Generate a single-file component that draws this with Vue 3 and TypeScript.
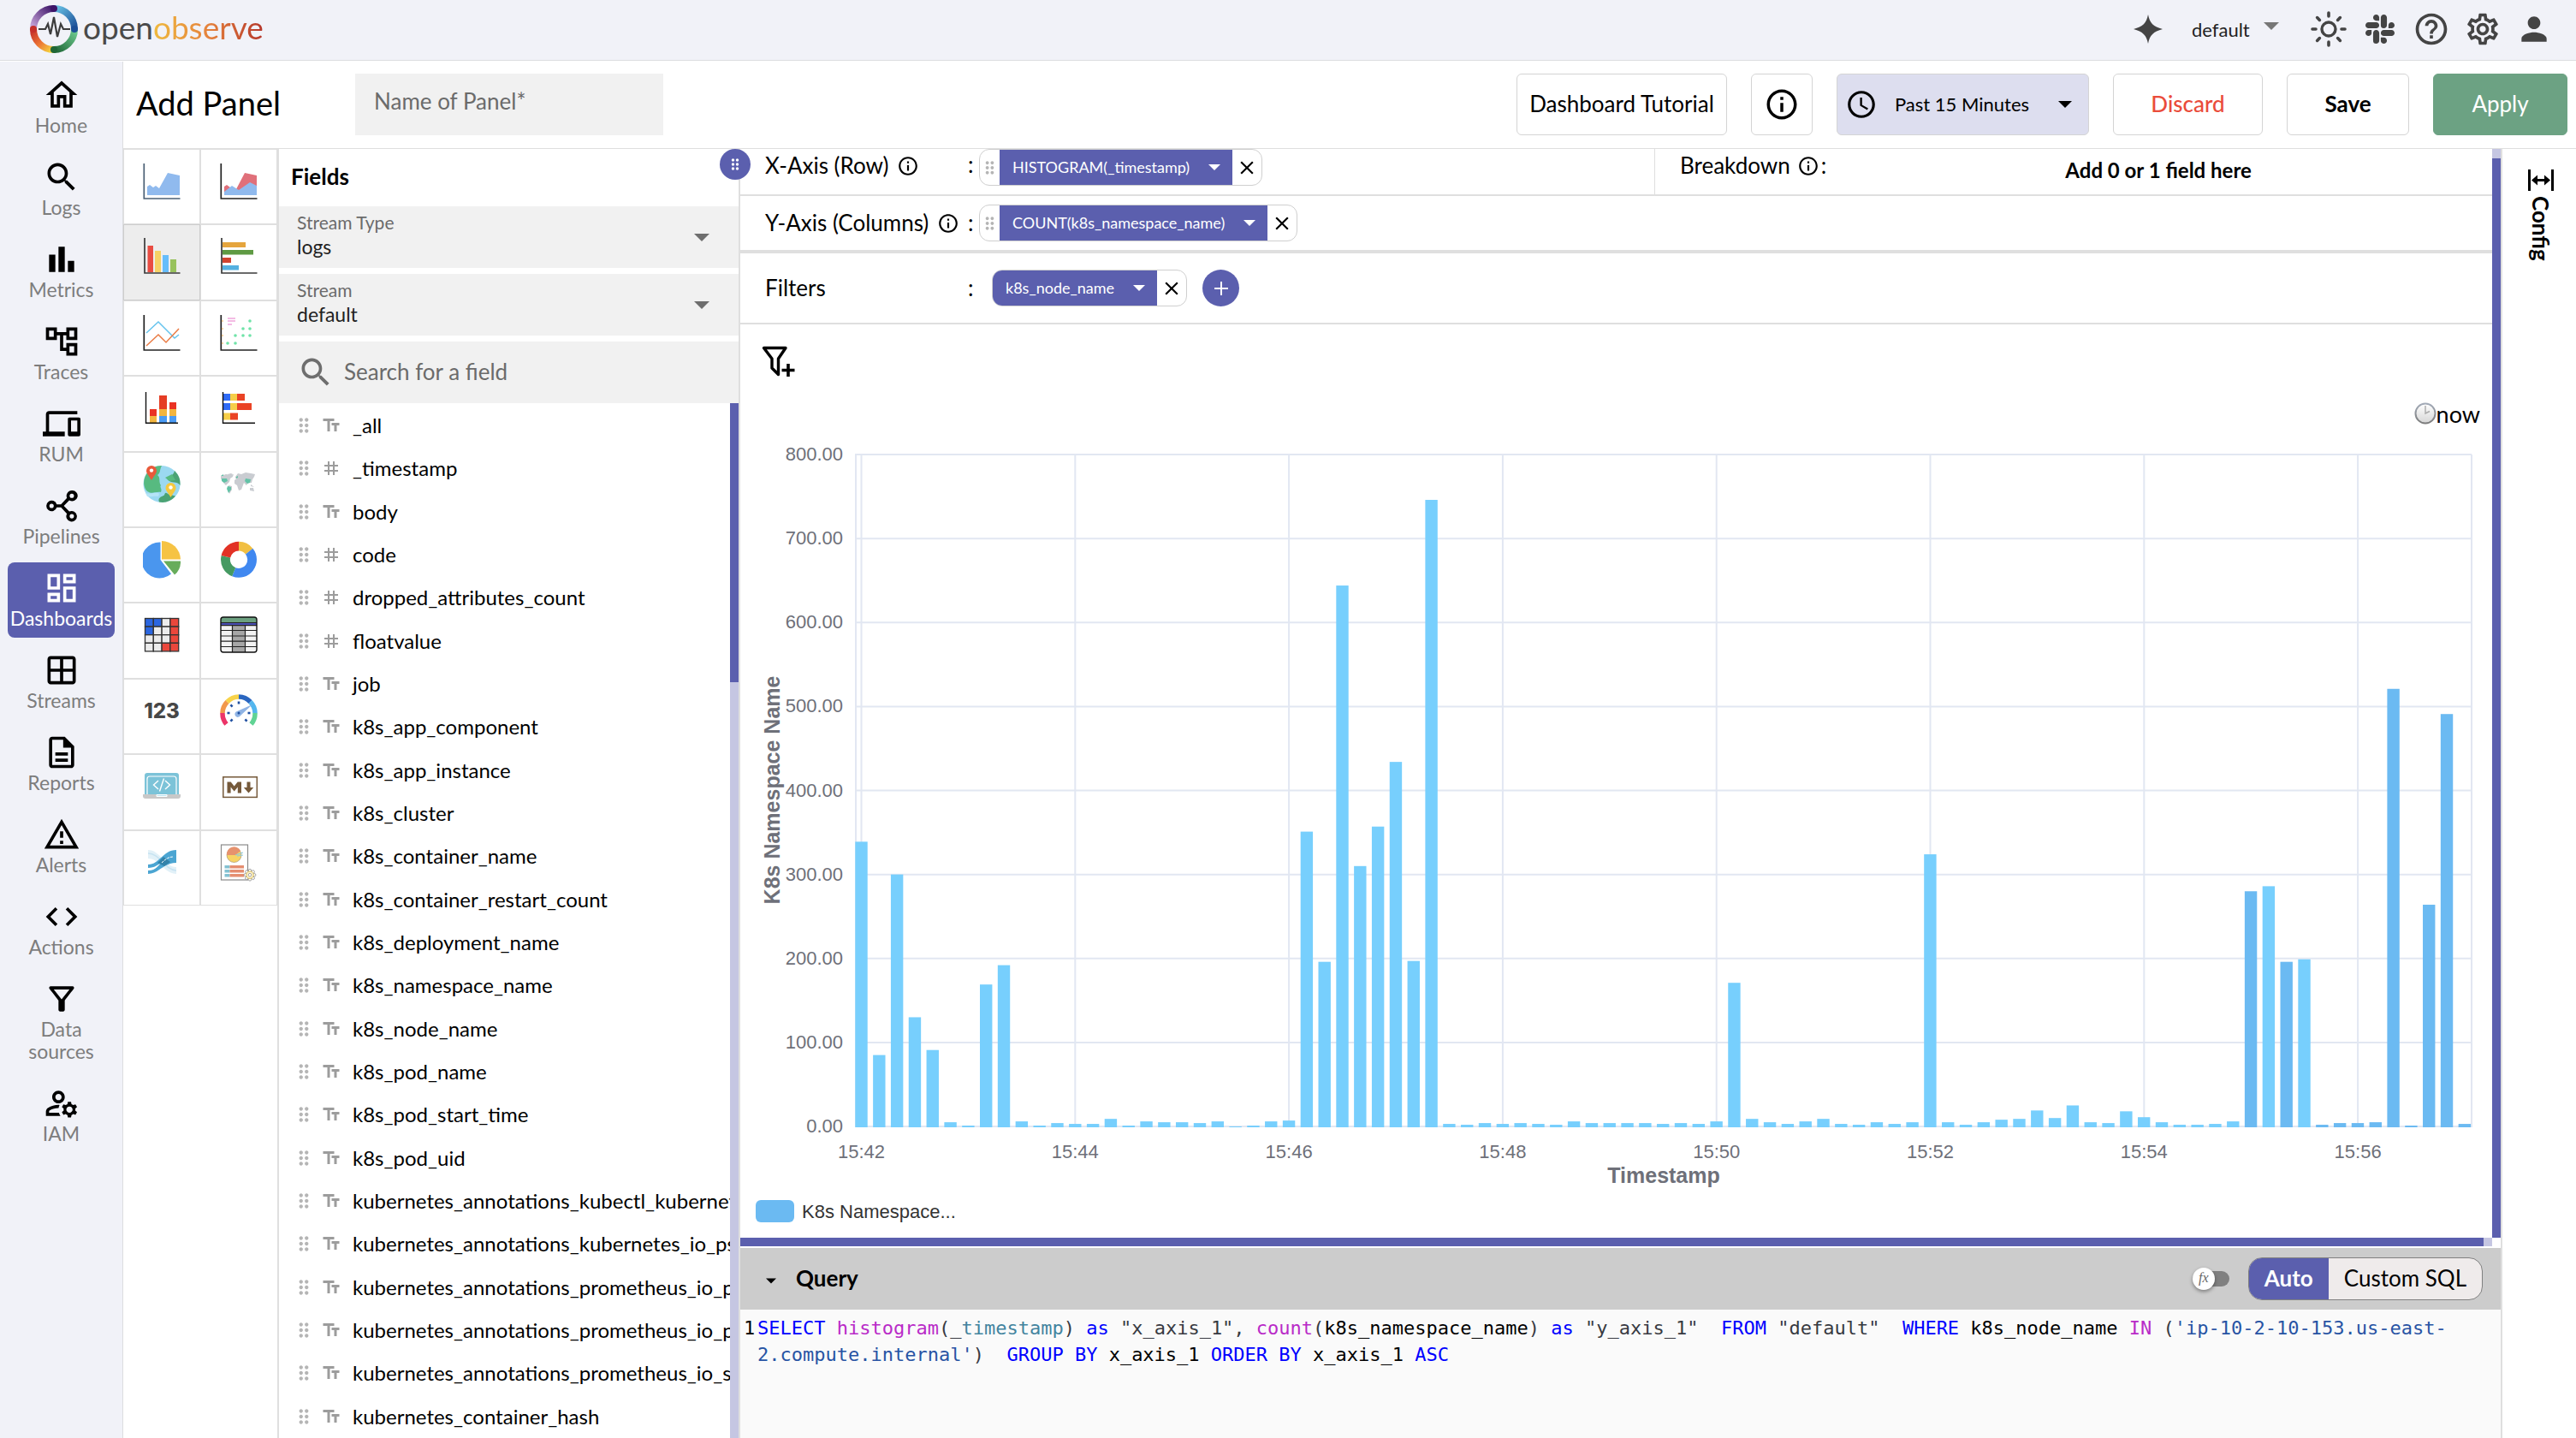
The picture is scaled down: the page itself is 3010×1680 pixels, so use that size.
<script setup lang="ts">
import { ref } from 'vue'

interface NavItem { label: string; path: string; active?: boolean }
interface Field { name: string; numeric?: boolean }
interface Token { t: string; k?: string }

const nav: NavItem[] = [
  { label: 'Home', path: 'M12 5.69l5 4.5V18h-2v-6H9v6H7v-7.81l5-4.5M12 3L2 12h3v8h6v-6h2v6h6v-8h3L12 3z' },
  { label: 'Logs', path: 'M15.5 14h-.79l-.28-.27C15.41 12.59 16 11.11 16 9.5 16 5.91 13.09 3 9.5 3S3 5.91 3 9.5 5.91 16 9.5 16c1.61 0 3.09-.59 4.23-1.57l.27.28v.79l5 4.99L20.49 19l-4.99-5zm-6 0C7.01 14 5 11.99 5 9.5S7.01 5 9.5 5 14 7.01 14 9.5 11.99 14 9.5 14z' },
  { label: 'Metrics', path: 'M4 9h4v11H4zm12 4h4v7h-4zm-6-9h4v16h-4z' },
  { label: 'Traces', path: 'M22 11V3h-7v3H9V3H2v8h7V8h2v10h4v3h7v-8h-7v3h-2V8h2v3h7zM7 9H4V5h3v4zm10 6h3v4h-3v-4zm0-10h3v4h-3V5z' },
  { label: 'RUM', path: 'M4 6h18V4H4c-1.1 0-2 .9-2 2v11H0v3h14v-3H4V6zm19 2h-6c-.55 0-1 .45-1 1v10c0 .55.45 1 1 1h6c.55 0 1-.45 1-1V9c0-.55-.45-1-1-1zm-1 9h-4v-7h4v7z' },
  { label: 'Pipelines', path: 'M18.5 2.2a3.4 3.4 0 0 0-3.1 4.8L11.6 11H8.9a3.4 3.4 0 1 0 0 2h2.7l3.8 4a3.4 3.4 0 1 0 1.5-1.4L13.4 12l3.5-3.6a3.4 3.4 0 1 0 1.6-6.2zm0 2a1.4 1.4 0 1 1 0 2.8 1.4 1.4 0 0 1 0-2.8zM5.6 10.6a1.4 1.4 0 1 1 0 2.8 1.4 1.4 0 0 1 0-2.8zm12.9 6.6a1.4 1.4 0 1 1 0 2.8 1.4 1.4 0 0 1 0-2.8z' },
  { label: 'Dashboards', active: true, path: 'M19 5v2h-4V5h4M9 5v6H5V5h4m10 8v6h-4v-6h4M9 17v2H5v-2h4M21 3h-8v6h8V3zM11 3H3v10h8V3zm10 8h-8v10h8V11zm-10 4H3v6h8v-6z' },
  { label: 'Streams', path: 'M19 3H5c-1.1 0-2 .9-2 2v14c0 1.1.9 2 2 2h14c1.1 0 2-.9 2-2V5c0-1.1-.9-2-2-2zm0 8h-6V5h6v6zm-8-6v6H5V5h6zm-6 8h6v6H5v-6zm8 6v-6h6v6h-6z' },
  { label: 'Reports', path: 'M8 16h8v2H8zm0-4h8v2H8zm6-10H6c-1.1 0-2 .9-2 2v16c0 1.1.89 2 1.99 2H18c1.1 0 2-.9 2-2V8l-6-6zm4 18H6V4h7v5h5v11z' },
  { label: 'Alerts', path: 'M12 5.99L19.53 19H4.47L12 5.99M12 2L1 21h22L12 2zm1 14h-2v2h2v-2zm0-6h-2v4h2v-4z' },
  { label: 'Actions', path: 'M9.4 16.6L4.8 12l4.6-4.6L8 6l-6 6 6 6 1.4-1.4zm5.2 0l4.6-4.6-4.6-4.6L16 6l6 6-6 6-1.4-1.4z' },
  { label: 'Data sources', path: 'M7 6h10l-5.01 6.3L7 6zm-2.75-.39C6.27 8.2 10 13 10 13v6c0 .55.45 1 1 1h2c.55 0 1-.45 1-1v-6s3.72-4.8 5.74-7.39c.51-.66.04-1.61-.79-1.61H5.04c-.83 0-1.3.95-.79 1.61z' },
  { label: 'IAM', path: 'M4 18v-.65c0-.34.16-.66.41-.81C6.1 15.53 8.03 15 10 15c.03 0 .05 0 .08.01.1-.7.3-1.37.59-1.98-.22-.02-.44-.03-.67-.03-2.42 0-4.68.67-6.61 1.82-.88.52-1.39 1.5-1.39 2.53V20h9.26c-.42-.6-.75-1.28-.97-2H4zM10 12c2.21 0 4-1.79 4-4s-1.79-4-4-4-4 1.79-4 4 1.79 4 4 4zm0-6c1.1 0 2 .9 2 2s-.9 2-2 2-2-.9-2-2 .9-2 2-2zM20.75 16c0-.22-.03-.42-.06-.63l1.14-1.01-1-1.73-1.45.49c-.32-.27-.68-.48-1.08-.63L18 11h-2l-.3 1.49c-.4.15-.76.36-1.08.63l-1.45-.49-1 1.73 1.14 1.01c-.03.21-.06.41-.06.63s.03.42.06.63l-1.14 1.01 1 1.73 1.45-.49c.32.27.68.48 1.08.63L16 21h2l.3-1.49c.4-.15.76-.36 1.08-.63l1.45.49 1-1.73-1.14-1.01c.03-.21.06-.41.06-.63zM17 18c-1.1 0-2-.9-2-2s.9-2 2-2 2 .9 2 2-.9 2-2 2z' },
]

const infoPath = 'M11 7h2v2h-2zm0 4h2v6h-2zm1-9C6.48 2 2 6.48 2 12s4.48 10 10 10 10-4.48 10-10S17.52 2 12 2zm0 18c-4.41 0-8-3.59-8-8s3.59-8 8-8 8 3.59 8 8-3.59 8-8 8z'
const closePath = 'M19 6.41L17.59 5 12 10.59 6.41 5 5 6.41 10.59 12 5 17.59 6.41 19 12 13.41 17.59 19 19 17.59 13.41 12z'
const helpPath = 'M11 18h2v-2h-2v2zm1-16C6.48 2 2 6.48 2 12s4.48 10 10 10 10-4.48 10-10S17.52 2 12 2zm0 18c-4.41 0-8-3.59-8-8s3.59-8 8-8 8 3.59 8 8-3.59 8-8 8zm0-14c-2.21 0-4 1.79-4 4h2c0-1.1.9-2 2-2s2 .9 2 2c0 2-3 1.75-3 5h2c0-2.25 3-2.5 3-5 0-2.21-1.79-4-4-4z'
const gearPath = 'M19.43 12.98c.04-.32.07-.64.07-.98s-.03-.66-.07-.98l2.11-1.65c.19-.15.24-.42.12-.64l-2-3.46c-.09-.16-.26-.25-.44-.25-.06 0-.12.01-.17.03l-2.49 1c-.52-.4-1.08-.73-1.69-.98l-.38-2.65C14.46 2.18 14.25 2 14 2h-4c-.25 0-.46.18-.49.42l-.38 2.65c-.61.25-1.17.59-1.69.98l-2.49-1c-.06-.02-.12-.03-.18-.03-.17 0-.34.09-.43.25l-2 3.46c-.13.22-.07.49.12.64l2.11 1.65c-.04.32-.07.65-.07.98s.03.66.07.98l-2.11 1.65c-.19.15-.24.42-.12.64l2 3.46c.09.16.26.25.44.25.06 0 .12-.01.17-.03l2.49-1c.52.4 1.08.73 1.69.98l.38 2.65c.03.24.24.42.49.42h4c.25 0 .46-.18.49-.42l.38-2.65c.61-.25 1.17-.59 1.69-.98l2.49 1c.06.02.12.03.18.03.17 0 .34-.09.43-.25l2-3.46c.12-.22.07-.49-.12-.64l-2.11-1.65zm-1.98-1.71c.04.31.05.52.05.73 0 .21-.02.43-.05.73l-.14 1.13.89.7 1.08.84-.7 1.21-1.27-.51-1.04-.42-.9.68c-.43.32-.84.56-1.25.73l-1.06.43-.16 1.13-.2 1.35h-1.4l-.19-1.35-.16-1.13-1.06-.43c-.43-.18-.83-.41-1.23-.71l-.91-.7-1.06.43-1.27.51-.7-1.21 1.08-.84.89-.7-.14-1.13c-.03-.31-.05-.54-.05-.74s.02-.43.05-.73l.14-1.13-.89-.7-1.08-.84.7-1.21 1.27.51 1.04.42.9-.68c.43-.32.84-.56 1.25-.73l1.06-.43.16-1.13.2-1.35h1.39l.19 1.35.16 1.13 1.06.43c.43.18.83.41 1.23.71l.91.7 1.06-.43 1.27-.51.7 1.21-1.07.85-.89.7.14 1.13zM12 8c-2.21 0-4 1.79-4 4s1.79 4 4 4 4-1.79 4-4-1.79-4-4-4zm0 6c-1.1 0-2-.9-2-2s.9-2 2-2 2 .9 2 2-.9 2-2 2z'
const slackPath = 'M3.362 10.11c0 .926-.756 1.681-1.681 1.681S0 11.036 0 10.111.756 8.43 1.68 8.43h1.682zm.846 0c0-.924.756-1.68 1.681-1.68s1.681.756 1.681 1.68v4.21c0 .924-.756 1.68-1.68 1.68a1.685 1.685 0 0 1-1.682-1.68zM5.89 3.362c-.926 0-1.682-.756-1.682-1.681S4.964 0 5.89 0s1.68.756 1.68 1.68v1.682zm0 .846c.924 0 1.68.756 1.68 1.681S6.814 7.57 5.89 7.57H1.68C.757 7.57 0 6.814 0 5.89c0-.926.756-1.682 1.68-1.682zm6.749 1.682c0-.926.755-1.682 1.68-1.682S16 4.964 16 5.889s-.756 1.681-1.68 1.681h-1.681zm-.848 0c0 .924-.755 1.68-1.68 1.68A1.685 1.685 0 0 1 8.43 5.89V1.68C8.43.757 9.186 0 10.11 0c.926 0 1.681.756 1.681 1.68zm-1.681 6.748c.926 0 1.682.756 1.682 1.681S11.036 16 10.11 16s-1.681-.756-1.681-1.68v-1.682h1.68zm0-.847c-.924 0-1.68-.755-1.68-1.68s.756-1.681 1.68-1.681h4.21c.924 0 1.68.756 1.68 1.68 0 .926-.756 1.681-1.68 1.681z'
const personPath = 'M12 12c2.21 0 4-1.79 4-4s-1.79-4-4-4-4 1.79-4 4 1.79 4 4 4zm0 2c-2.67 0-8 1.34-8 4v2h16v-2c0-2.66-5.33-4-8-4z'
const clockPath = 'M11.99 2C6.47 2 2 6.48 2 12s4.47 10 9.99 10C17.52 22 22 17.52 22 12S17.52 2 11.99 2zM12 20c-4.42 0-8-3.58-8-8s3.58-8 8-8 8 3.58 8 8-3.58 8-8 8zm.5-13H11v6l5.25 3.15.75-1.23-4.5-2.67z'
const textPath = 'M2.5 4v3h5v12h3V7h5V4h-13zm19 5h-9v3h3v7h3v-7h3V9z'
const hashPath = 'M20 10V8h-4V4h-2v4h-4V4H8v4H4v2h4v4H4v2h4v4h2v-4h4v4h2v-4h4v-2h-4v-4h4zm-6 4h-4v-4h4v4z'
const dotsPath = 'M11 18c0 1.1-.9 2-2 2s-2-.9-2-2 .9-2 2-2 2 .9 2 2zm-2-8c-1.1 0-2 .9-2 2s.9 2 2 2 2-.9 2-2-.9-2-2-2zm0-6c-1.1 0-2 .9-2 2s.9 2 2 2 2-.9 2-2-.9-2-2-2zm6 4c1.1 0 2-.9 2-2s-.9-2-2-2-2 .9-2 2 .9 2 2 2zm0 2c-1.1 0-2 .9-2 2s.9 2 2 2 2-.9 2-2-.9-2-2-2zm0 6c-1.1 0-2 .9-2 2s.9 2 2 2 2-.9 2-2-.9-2-2-2z'

const r = (x: number, y: number, w: number, h: number, f: string) => `<rect x="${x}" y="${y}" width="${w}" height="${h}" fill="${f}"/>`
const axes = (c: string, x = 1.3, y = 42) => `<path d="M${x} ${y - 41}V${y}H43.5" fill="none" stroke="${c}" stroke-width="1.7"/>`

const heatCells = ['bbgr', 'bggr', 'gggr', 'ggrr']
  .map((row, j) => [...row].map((c, i) => `<rect x="${2.5 + i * 9.8}" y="${2.5 + j * 9.6}" width="9.8" height="9.6" fill="${c === 'b' ? '#2b66e0' : c === 'r' ? '#ea473c' : '#ececec'}" stroke="#333" stroke-width="1.3"/>`).join('')).join('')
const scatterDots = [[9, 34], [18, 34], [18, 25], [27, 25], [35, 25], [27, 17], [35, 17], [35, 8]]
  .map(([x, y]) => `<circle cx="${x}" cy="${y}" r="1.8" fill="#6fe3a8"/>`).join('')
const gaugeTicks = [135, 180, 225, 270, 0, 45]
  .map((a) => `<path d="M10.5 0h3" stroke="#1f4fa0" stroke-width="2.6" transform="translate(22 24) rotate(${a})"/>`).join('')
const gear = [0, 45, 90, 135, 180, 225, 270, 315]
  .map((a) => `<circle cx="35" cy="31" r="1.7" fill="#fff" stroke="#8e8e8e" stroke-width=".8" transform="rotate(${a} 35 36.2)"/>`).join('')

const chartTypes: { name: string; svg: string }[] = [
  { name: 'Area', svg: axes('#4b6075') + '<path d="M5 28l3-2 4 3 3-2 4 3L29 12l14 3v23H5z" fill="#90baee"/>' },
  { name: 'Stacked area', svg: axes('#222') + '<path d="M5 28l3-2 4 3 7 2L29 12l14 3v23H5z" fill="#e0707a"/><path d="M5 34l9-7 8 5 13-9 8 4v11H5z" fill="#90baee"/>' },
  { name: 'Bar', svg: r(5.5, 9, 6.5, 31, '#e94c42') + r(14, 15, 7, 25, '#f6d165') + r(23, 20, 7, 20, '#66bdfb') + r(32, 25, 7, 15, '#98c25c') + axes('#3a3a3a', 2, 41) },
  { name: 'Horizontal bar', svg: r(3, 5, 27, 6, '#e5a53d') + r(3, 14, 36, 5.5, '#5f9a43') + r(3, 23, 10, 6, '#d1432f') + r(3, 32, 19, 5.5, '#55b0e0') + axes('#3a3a3a', 2, 41) },
  { name: 'Line', svg: axes('#222') + '<path d="M4 22L18 9l19 19 5-4" fill="none" stroke="#66c4ee" stroke-width="1.5"/><path d="M4 37l14-13 9 9 15-16" fill="none" stroke="#ea7c45" stroke-width="1.5"/>' },
  { name: 'Scatter', svg: axes('#222') + scatterDots + '<path d="M9 5h9M9 8h9M9 12h5" stroke="#efa6dc" stroke-width="1.5"/><path d="M2 8h2M2 17h2M2 25h2M2 34h2" stroke="#f5c98c" stroke-width="1.5"/>' },
  { name: 'Stacked', svg: r(8, 23, 8, 8, '#ea3223') + r(8, 31, 8, 8, '#f3b53f') + r(19, 7, 9, 16, '#e53d25') + r(19, 23, 9, 8, '#f3b53f') + r(19, 31, 9, 8, '#4a9bf5') + r(31, 15, 8, 8, '#ea3223') + r(31, 23, 8, 8, '#f3b53f') + r(31, 31, 8, 8, '#4a9bf5') + '<path d="M3.5 3v36.3H41" fill="none" stroke="#111" stroke-width="1.4"/>' },
  { name: 'Horizontal stacked', svg: r(4, 5, 8, 8, '#2f6bf6') + r(12, 5, 8, 8, '#f6ce48') + r(20, 5, 9, 8, '#ea4325') + r(4, 16, 8, 8, '#2f6bf6') + r(12, 16, 8, 8, '#f6ce48') + r(20, 16, 17, 8, '#ea4325') + r(4, 27.5, 8, 8, '#f6ce48') + r(12, 27.5, 9, 8, '#ea4325') + '<path d="M3.5 3v36.3H41" fill="none" stroke="#111" stroke-width="1.4"/>' },
  { name: 'Geo map', svg: '<circle cx="22" cy="21.5" r="21.5" fill="#9bd9f1"/><path d="M4 10C8 3 15 0 22 0c-3 6-1 8-5 11 4 3 1 8 4 12-2 2 2 4 0 8-6-1-10 3-16-1C0 25 0 16 4 10z" fill="#57ba80"/><path d="M37 6c5 5 7 10 6.500 17-4-6-10-1-15-7 0-4 7-3 8.500-10z" fill="#4ba374"/><path d="M26 14l8-4 4 7-7 1z" fill="#57ba80"/><path d="M19 42.500c-2-5 2-6 6-8 1-4 2-3 5-1l8 2c-5 6-12 8.500-19 7z" fill="#4ba374"/><path d="M3 32c6 2 12-2 16 1l-1 3c-5-1-9 1-13 0z" fill="#b5e4f6"/><path d="M10 17C7 12 4 9 4 6a6 6 0 0 1 12 0c0 3-3 6-6 11z" fill="#e9593a"/><circle cx="10" cy="5.600" r="2.200" fill="#fff"/><path d="M32.500 37c-3-5-6-8-6-11a6 6 0 0 1 12 0c0 3-3 6-6 11z" fill="#f5c93f"/><circle cx="32.500" cy="25.500" r="2.200" fill="#fff"/>' },
  { name: 'World map', svg: '<path d="M1 12l6-2 6 1 3-1-1 3-3 2-1 4-4 4-3-3-3-5zM9 10l4-1 2 1-3 2zM10 23l4 1 0 4-3 5-2-6zM17 17l4-3 5 1 2 5-3 8-3 1-2-6-3-2zM18 13l3-4 4 1 5-2 6 1 5 1-1 3-2 3-1 4-4 0-2 3-3-3-3-1-3-4-4 0zM35 26l4 0 1 4-5-1zM36 22l4 3-4-1z" fill="#c9ccd1"/><path d="M2 15l6 0 1 3-4 2-3-2zM9 24l4 1 0 3-3 4-2-5zM1 12l3-2 0 2zM30 15l6 1-1 4-3 1-3-3zM19 13l2-1 0 2-2 1z" fill="#62c2a6"/>' },
  { name: 'Pie', svg: '<path d="M20.500 1.500V22L33 38.500A21 21 0 1 1 20.500 1.500z" fill="#4a96ee"/><path d="M22 0a22 22 0 0 1 22 21.500H22z" fill="#f6c344"/><path d="M24 23.500h20a20 20 0 0 1-7 16z" fill="#67ac5b"/>' },
  { name: 'Donut', svg: '<g fill="none" stroke-width="10.800"><path d="M22 6.200a15.500 15.500 0 0 1 12.200 6" stroke="#f1bf42"/><path d="M34.200 12.200a15.500 15.500 0 0 1-18 24" stroke="#4088f0"/><path d="M16.200 36.200a15.500 15.500 0 0 1-9.300-18" stroke="#459a62"/><path d="M6.900 18.200A15.500 15.500 0 0 1 22 6.200" stroke="#e23225"/></g>' },
  { name: 'Heatmap', svg: heatCells },
  { name: 'Table', svg: '<rect x="1" y="1" width="42" height="41" rx="3" fill="#f2f2f2"/>' + r(14.5, 10, 15, 32, '#a6a6a6') + '<path d="M1 8V4a3 3 0 0 1 3-3h36a3 3 0 0 1 3 3v4z" fill="#6ba07f"/>' + r(1, 8, 42, 2.5, '#4a50b5') + '<path d="M1 7.500h42M1 10.600h42M1 16.500h42M1 23h42M1 29.200h42M1 35.500h42M14.500 10v32M29.500 10v32" stroke="#222" stroke-width="1.2"/><rect x="1" y="1" width="42" height="41" rx="3" fill="none" stroke="#111" stroke-width="1.4"/>' },
  { name: 'Metric text', svg: '<text x="22" y="30" text-anchor="middle" font-family="Inter, sans-serif" font-weight="800" font-size="24" fill="#474747">123</text>' },
  { name: 'Gauge', svg: '<g fill="none" stroke-width="5.500"><path d="M7.500 37A19 19 0 0 1 3 24" stroke="#ec3468"/><path d="M3 24a19 19 0 0 1 5.500-13" stroke="#f2984c"/><path d="M8.500 11A19 19 0 0 1 22 5" stroke="#f8d34a"/><path d="M22 5a19 19 0 0 1 13.500 6" stroke="#2a66c0"/><path d="M35.500 11A19 19 0 0 1 41 24" stroke="#52b6ee"/><path d="M41 24a19 19 0 0 1-4.500 13" stroke="#60d394"/></g>' + gaugeTicks + '<path d="M20 22L38 14 24 27a3.500 3.500 0 1 1-4-5z" fill="#8fb3e4"/><circle cx="22" cy="24" r="1.500" fill="#1f4fa0"/>' },
  { name: 'HTML', svg: '<path d="M2 31V9a3 3 0 0 1 3-3h34a3 3 0 0 1 3 3v22z" fill="#7cc3d8"/><path d="M5 31V13a3 3 0 0 1 3-3h28a3 3 0 0 1 3 3v18" fill="none" stroke="#fff" stroke-width="1.2"/><path d="M0 31h44v2a3 3 0 0 1-3 3H3a3 3 0 0 1-3-3z" fill="#c8c8c8"/><path d="M16 31.500h12v2H16z" fill="#b9e3f0" stroke="#fff"/><path d="M18 15l-5.500 5 5.500 5M26 15l5.500 5-5.500 5M24.500 12.500l-5 15" fill="none" stroke="#fff" stroke-width="1.4"/>' },
  { name: 'Markdown', svg: '<rect x="3.800" y="10.800" width="39.500" height="23.600" fill="#fff" stroke="#75593a" stroke-width="1.500"/><path d="M8.500 29.500v-13h4.200l4 5 4-5H25v13h-4.200v-7l-4.100 5-4.100-5v7zM31.500 16.500h4v6.500h3.700L33.500 29.500l-5.700-6.500h3.700z" fill="#75593a"/>' },
  { name: 'Sankey', svg: '<path d="M6 7c14 0 20 20 33 20v8C25 35 20 17 6 17z" fill="#e2f1f8"/><path d="M6 11c14 0 20 20 33 20" fill="none" stroke="#c7e3f1" stroke-width="1.500"/><path d="M6 24c14 0 17-17 33-17v15C24 22 18 35 6 35v-4c10 0 12-7 16-9-5 2-8 6-16 6z" fill="#4ba5d2"/><path d="M17 22l7-7 8 6-7 5z" fill="#3383aa"/><path d="M22 22c4-4 8-7 13-7" fill="none" stroke="#fff" stroke-width="1" stroke-dasharray="3 1"/>' },
  { name: 'Custom chart', svg: '<rect x="1.500" y="1" width="31" height="41" fill="#fff" stroke="#8b8b8b" stroke-width="1.200"/><circle cx="16.500" cy="13" r="8.500" fill="#f7d364" stroke="#9d8a6a" stroke-width=".6"/><path d="M8 13h10l6-5a8.500 8.500 0 0 0-16 5z" fill="#e6926e"/><path d="M18 13l9-3M20 14l7-1" stroke="#8cc8dc" stroke-width="1.200"/>' + [25, 30, 35].map((y) => r(5.5, y, 6, 3.5, '#83c1d2') + r(11.5, y, 16.5, 3.5, '#e58e70')).join('') + gear + '<circle cx="35" cy="36.200" r="4.200" fill="#fdf3cf" stroke="#e3c55d" stroke-width="1"/><circle cx="35" cy="36.200" r="1.800" fill="#fff" stroke="#8e8e8e" stroke-width=".8"/>' },
]

const fields: Field[] = [
  { name: '_all' }, { name: '_timestamp', numeric: true }, { name: 'body' }, { name: 'code', numeric: true },
  { name: 'dropped_attributes_count', numeric: true }, { name: 'floatvalue', numeric: true }, { name: 'job' },
  { name: 'k8s_app_component' }, { name: 'k8s_app_instance' }, { name: 'k8s_cluster' }, { name: 'k8s_container_name' },
  { name: 'k8s_container_restart_count' }, { name: 'k8s_deployment_name' }, { name: 'k8s_namespace_name' },
  { name: 'k8s_node_name' }, { name: 'k8s_pod_name' }, { name: 'k8s_pod_start_time' }, { name: 'k8s_pod_uid' },
  { name: 'kubernetes_annotations_kubectl_kubernetes_io' }, { name: 'kubernetes_annotations_kubernetes_io_psp' },
  { name: 'kubernetes_annotations_prometheus_io_path' }, { name: 'kubernetes_annotations_prometheus_io_port' },
  { name: 'kubernetes_annotations_prometheus_io_scrape' }, { name: 'kubernetes_container_hash' },
]

/* Counts per 10 seconds, starting at 15:42:00 */
const counts: number[] = [
  339, 85, 300, 130, 91, 5, 1, 169, 192, 6, 1, 4, 3, 3, 9, 1, 6, 5, 5, 4, 6, 0, 1, 6, 7,
  351, 196, 644, 310, 357, 434, 197, 746, 3, 2, 4, 3, 4, 3, 2, 6, 4, 4, 4, 4, 3, 4, 3, 6, 171,
  9, 5, 3, 6, 9, 3, 2, 5, 3, 5, 324, 5, 2, 5, 8, 9, 19, 10, 25, 5, 4, 18, 11, 5, 2, 2, 3, 6,
  280, 286, 196, 199, 2, 4, 4, 5, 521, 1, 264, 491, 3,
]
const darker = new Set([78, 80, 82, 83, 84, 85, 86, 87, 88, 89, 90])
const plot = { left: 134, right: 2023, top: 28, bottom: 813 }
const unit = (plot.bottom - plot.top) / 800
const bars = counts.map((v, i) => {
  const x = 134.3 + i * 20.815
  return { x, y: plot.bottom - v * unit, w: Math.min(14.4, plot.right - x), h: v * unit, fill: darker.has(i) ? '#6bbaf2' : '#77cffd' }
})
const yTicks = [800, 700, 600, 500, 400, 300, 200, 100, 0].map((v) => ({ label: v.toFixed(2), y: plot.bottom - v * unit }))
const xTicks = [42, 44, 46, 48, 50, 52, 54, 56].map((m, k) => ({ label: `15:${m}`, x: 141.5 + k * 249.8 }))

const sql: Token[][] = [
  [
    { t: 'SELECT', k: 'kw' }, { t: ' ' }, { t: 'histogram', k: 'fn' }, { t: '(_' }, { t: 'timestamp', k: 'ty' }, { t: ') ' },
    { t: 'as', k: 'kw' }, { t: ' "x_axis_1", ' }, { t: 'count', k: 'fn' }, { t: '(' }, { t: 'k8s_namespace_name', k: 'id' }, { t: ') ' },
    { t: 'as', k: 'kw' }, { t: ' "y_axis_1"  ' }, { t: 'FROM', k: 'kw' }, { t: ' "default"  ' }, { t: 'WHERE', k: 'kw' },
    { t: ' k8s_node_name ', k: 'id' }, { t: 'IN', k: 'fn' }, { t: ' (' }, { t: "'ip-10-2-10-153.us-east-", k: 'st' },
  ],
  [
    { t: "2.compute.internal'", k: 'st' }, { t: ')  ' }, { t: 'GROUP BY', k: 'kw' }, { t: ' x_axis_1 ', k: 'id' },
    { t: 'ORDER BY', k: 'kw' }, { t: ' x_axis_1 ', k: 'id' }, { t: 'ASC', k: 'kw' },
  ],
]

const panelName = ref('')
const search = ref('')
const selectedType = ref(2)
</script>

<template>
  <div class="app">
    <header class="topbar">
      <a href="#" class="logo" aria-label="openobserve">
        <svg width="56" height="56" viewBox="0 0 56 56" aria-hidden="true">
          <defs>
            <linearGradient id="lgP" x1="0" y1="1" x2="1" y2="0"><stop offset="0" stop-color="#c9a8dc" /><stop offset="1" stop-color="#3d1468" /></linearGradient>
            <linearGradient id="lgB" x1="0" y1="0" x2="1" y2="1"><stop offset="0" stop-color="#69c3e6" /><stop offset="1" stop-color="#1b4e96" /></linearGradient>
            <linearGradient id="lgG" x1="1" y1="0" x2="0" y2="1"><stop offset="0" stop-color="#6ecb90" /><stop offset="1" stop-color="#1f6636" /></linearGradient>
            <linearGradient id="lgR" x1="0" y1="0" x2="1" y2="1"><stop offset="0" stop-color="#c5302a" /><stop offset=".5" stop-color="#ec7434" /><stop offset="1" stop-color="#f5d93e" /></linearGradient>
          </defs>
          <g fill="none" stroke-width="8">
            <path d="M28 4a24 24 0 0 1 24 24" stroke="url(#lgB)" />
            <path d="M52 28a24 24 0 0 1-24 24" stroke="url(#lgG)" />
            <path d="M28 52A24 24 0 0 1 4 28" stroke="url(#lgR)" />
            <path d="M4 28A24 24 0 0 1 28 4" stroke="url(#lgP)" />
          </g>
          <circle cx="28" cy="4" r="4" fill="#3d1468" /><circle cx="52" cy="28" r="4" fill="#1b4e96" />
          <circle cx="28" cy="52" r="4" fill="#1f6636" /><circle cx="4" cy="28" r="4" fill="#c5302a" />
          <path d="M10 28h8l3-6 3 12 4-20 4 23 4-15 3 6h8" fill="none" stroke="#3d3d3d" stroke-width="2.2" />
        </svg>
        <span class="word"><span class="open">open</span><span class="observe">observe</span></span>
      </a>
      <div class="topbar-right">
        <button class="ico spark" aria-label="Assistant"><svg width="34" height="34" viewBox="0 0 34 34"><path d="M17 0c2 10 6 14 17 17-11 3-15 7-17 17C15 24 11 20 0 17 11 14 15 10 17 0z" /></svg></button>
        <span class="org">
          <select aria-label="Organization"><option>default</option></select>
          <svg class="caret" width="18" height="9" viewBox="0 0 10 5"><path d="M0 0h10L5 5z" /></svg>
        </span>
        <button class="ico" aria-label="Theme"><svg width="44" height="44" viewBox="0 0 44 44"><circle cx="22" cy="22" r="8" fill="none" stroke="currentColor" stroke-width="3.4" /><path d="M22 3v4M22 37v4M3 22h4M37 22h4M8.600 8.600l2.800 2.800M32.600 32.600l2.800 2.800M8.600 35.400l2.800-2.800M32.600 11.400l2.800-2.800" stroke="currentColor" stroke-width="3.6" stroke-linecap="round" /></svg></button>
        <button class="ico" aria-label="Slack"><svg width="34" height="34" viewBox="0 0 16 16"><path :d="slackPath" /></svg></button>
        <button class="ico" aria-label="Help"><svg width="44" height="44" viewBox="0 0 24 24"><path :d="helpPath" /></svg></button>
        <button class="ico" aria-label="Settings"><svg width="44" height="44" viewBox="0 0 24 24"><path :d="gearPath" /></svg></button>
        <button class="ico" aria-label="Account"><svg width="44" height="44" viewBox="0 0 24 24"><path :d="personPath" /></svg></button>
      </div>
    </header>

    <div class="shell">
      <nav class="sidebar">
        <a v-for="n in nav" :key="n.label" href="#" class="nav-item" :class="{ active: n.active }">
          <svg width="44" height="44" viewBox="0 0 24 24" aria-hidden="true"><path :d="n.path" /></svg>
          <span>{{ n.label }}</span>
        </a>
      </nav>

      <div class="page">
        <div class="page-head">
          <h1>Add Panel</h1>
          <input v-model="panelName" class="name" type="text" placeholder="Name of Panel*" aria-label="Name of Panel" />
          <div class="actions">
            <button class="btn">Dashboard Tutorial</button>
            <button class="btn info" aria-label="Info"><svg width="42" height="42" viewBox="0 0 24 24"><path :d="infoPath" /></svg></button>
            <button class="btn time">
              <svg width="38" height="38" viewBox="0 0 24 24"><path :d="clockPath" /></svg>
              <span>Past 15 Minutes</span>
              <svg class="caret" width="16" height="8" viewBox="0 0 10 5"><path d="M0 0h10L5 5z" /></svg>
            </button>
            <button class="btn discard">Discard</button>
            <button class="btn save">Save</button>
            <button class="btn apply">Apply</button>
          </div>
        </div>

        <div class="work">
          <div class="types">
            <div class="type-grid">
              <button v-for="(c, i) in chartTypes" :key="c.name" class="type" :class="{ on: i === selectedType }" :aria-label="c.name" @click="selectedType = i">
                <svg width="44" height="44" viewBox="0 0 44 44" v-html="c.svg"></svg>
              </button>
            </div>
          </div>

          <aside class="fields">
            <button class="splitter" aria-label="Toggle fields"><svg width="20" height="20" viewBox="0 0 24 24"><path :d="dotsPath" /></svg></button>
            <h2>Fields</h2>
            <div class="sel">
              <label for="stype">Stream Type</label>
              <select id="stype"><option>logs</option></select>
              <svg class="caret" width="18" height="9" viewBox="0 0 10 5"><path d="M0 0h10L5 5z" /></svg>
            </div>
            <div class="sel">
              <label for="stream">Stream</label>
              <select id="stream"><option>default</option></select>
              <svg class="caret" width="18" height="9" viewBox="0 0 10 5"><path d="M0 0h10L5 5z" /></svg>
            </div>
            <div class="search">
              <svg width="44" height="44" viewBox="0 0 24 24"><path :d="nav[1].path" /></svg>
              <input v-model="search" type="text" placeholder="Search for a field" aria-label="Search for a field" />
            </div>
            <div class="list-wrap">
              <ul class="list">
                <li v-for="f in fields" :key="f.name">
                  <svg class="grip" width="26" height="26" viewBox="0 0 24 24"><path :d="dotsPath" /></svg>
                  <svg class="kind" width="24" height="24" viewBox="0 0 24 24"><path :d="f.numeric ? hashPath : textPath" /></svg>
                  <span>{{ f.name }}</span>
                </li>
              </ul>
              <div class="track"><div class="thumb"></div></div>
            </div>
          </aside>

          <main class="main">
            <div class="upper">
              <div class="upper-body">
                <div class="axis-row x">
                  <div class="axis-cell">
                    <div class="axis-label"><span>X-Axis (Row)</span><svg width="26" height="26" viewBox="0 0 24 24"><path :d="infoPath" /></svg></div>
                    <span class="colon">:</span>
                    <div class="chip">
                      <svg class="grip" width="26" height="26" viewBox="0 0 24 24"><path :d="dotsPath" /></svg>
                      <button class="chip-main">HISTOGRAM(_timestamp)<svg class="caret" width="14" height="7" viewBox="0 0 10 5"><path d="M0 0h10L5 5z" /></svg></button>
                      <button class="chip-x" aria-label="Remove"><svg width="26" height="26" viewBox="0 0 24 24"><path :d="closePath" /></svg></button>
                    </div>
                  </div>
                  <div class="breakdown">
                    <span>Breakdown</span><svg width="26" height="26" viewBox="0 0 24 24"><path :d="infoPath" /></svg><span class="bcolon">:</span>
                    <strong>Add 0 or 1 field here</strong>
                  </div>
                </div>
                <div class="axis-row y">
                  <div class="axis-label"><span>Y-Axis (Columns)</span><svg width="26" height="26" viewBox="0 0 24 24"><path :d="infoPath" /></svg></div>
                  <span class="colon">:</span>
                  <div class="chip">
                    <svg class="grip" width="26" height="26" viewBox="0 0 24 24"><path :d="dotsPath" /></svg>
                    <button class="chip-main">COUNT(k8s_namespace_name)<svg class="caret" width="14" height="7" viewBox="0 0 10 5"><path d="M0 0h10L5 5z" /></svg></button>
                    <button class="chip-x" aria-label="Remove"><svg width="26" height="26" viewBox="0 0 24 24"><path :d="closePath" /></svg></button>
                  </div>
                </div>
                <div class="axis-row f">
                  <div class="axis-label"><span>Filters</span></div>
                  <span class="colon">:</span>
                  <div class="chip flt">
                    <button class="chip-main">k8s_node_name<svg class="caret" width="14" height="7" viewBox="0 0 10 5"><path d="M0 0h10L5 5z" /></svg></button>
                    <button class="chip-x" aria-label="Remove"><svg width="26" height="26" viewBox="0 0 24 24"><path :d="closePath" /></svg></button>
                  </div>
                  <button class="plus" aria-label="Add filter"><svg width="18" height="18" viewBox="0 0 18 18"><path d="M9 1v16M1 9h16" stroke="#fff" stroke-width="2" /></svg></button>
                </div>
                <div class="var-row">
                  <button class="ico-plain" aria-label="Add variable filter">
                    <svg width="40" height="38" viewBox="0 0 40 38"><path d="M2.500 2.500h25.500L19.500 15v18.500L12 26V15z" fill="none" stroke="#000" stroke-width="3.400" stroke-linejoin="round" /><path d="M31 21v15M23.500 28.500h15" stroke="#fff" stroke-width="8" /><path d="M31 21v15M23.500 28.500h15" stroke="#000" stroke-width="3.600" /></svg>
                  </button>
                </div>
                <div class="now-row">
                  <svg width="26" height="26" viewBox="0 0 26 26" aria-hidden="true">
                    <defs><linearGradient id="face" x1="0" y1="0" x2="0" y2="1"><stop offset="0" stop-color="#fff" /><stop offset="1" stop-color="#d6d6d6" /></linearGradient><linearGradient id="rim" x1="0" y1="0" x2="0" y2="1"><stop offset="0" stop-color="#a3abb8" /><stop offset="1" stop-color="#7c7c7c" /></linearGradient></defs>
                    <circle cx="13" cy="13" r="11.500" fill="url(#face)" stroke="url(#rim)" stroke-width="2" /><path d="M13 4v9l5-2.500" fill="none" stroke="#aaa" stroke-width="1.400" />
                  </svg><span>now</span>
                </div>
                <svg class="chart" viewBox="0 0 2047 943" preserveAspectRatio="xMinYMin meet" role="img" aria-label="K8s Namespace Name by Timestamp">
                  <g stroke="#e2e7f2" stroke-width="2">
                    <line v-for="t in yTicks" :key="t.label" :x1="plot.left" :x2="plot.right" :y1="t.y" :y2="t.y" />
                    <line v-for="t in xTicks" :key="t.label" :x1="t.x" :x2="t.x" :y1="plot.top" :y2="plot.bottom" />
                    <line :x1="plot.left + 1" :x2="plot.left + 1" :y1="plot.top" :y2="plot.bottom" />
                    <line :x1="plot.right" :x2="plot.right" :y1="plot.top" :y2="plot.bottom + 1" />
                  </g>
                  <rect v-for="(b, i) in bars" :key="i" :x="b.x" :y="b.y" :width="b.w" :height="b.h + 1" :fill="b.fill" />
                  <g class="tick" text-anchor="end"><text v-for="t in yTicks" :key="t.label" x="120" :y="t.y + 7">{{ t.label }}</text></g>
                  <g class="tick" text-anchor="middle"><text v-for="t in xTicks" :key="t.label" :x="t.x" y="850">{{ t.label }}</text></g>
                  <text class="axis-title" text-anchor="middle" x="1079" y="879">Timestamp</text>
                  <text class="axis-title" text-anchor="middle" transform="translate(46 420) rotate(-90)">K8s Namespace Name</text>
                  <rect x="18" y="899" width="45" height="26" rx="6" fill="#6bbaf2" />
                  <text class="legend" x="72" y="920">K8s Namespace...</text>
                </svg>
              </div>
              <div class="vtrack"><div class="vthumb"></div></div>
            </div>
            <div class="htrack"><div class="hthumb"></div><div class="hrest"></div></div>

            <div class="query-bar">
              <svg class="caret" width="12" height="7" viewBox="0 0 10 5"><path d="M0 0h10L5 5z" /></svg>
              <h2>Query</h2>
              <label class="toggle"><input type="checkbox" aria-label="VRL function editor" /><span class="knob">fx</span></label>
              <div class="seg"><button class="on">Auto</button><button>Custom SQL</button></div>
            </div>
            <div class="editor">
              <span class="ln">1</span>
              <pre><code><span v-for="(line, i) in sql" :key="i" class="line"><span v-for="(t, j) in line" :key="j" :class="t.k">{{ t.t }}</span></span></code></pre>
            </div>
          </main>

          <aside class="config">
            <svg width="30" height="25" viewBox="0 0 30 25" aria-hidden="true"><path d="M1.500 0v25M28.500 0v25" stroke="#000" stroke-width="3" /><path d="M4 12.500l7-6v4.500h8V6.500l7 6-7 6V14h-8v4.500z" /></svg>
            <span>Config</span>
          </aside>
        </div>
      </div>
    </div>
  </div>
</template>

<style>
body { margin: 0; background: #fff; }
</style>

<style scoped>
* { box-sizing: border-box; }
.app {
  display: flex; flex-direction: column; height: 100vh; overflow: hidden;
  font-family: Lato, "Open Sans", sans-serif; font-size: 26px; color: #000; background: #fff;
}
button, input, select { font: inherit; color: inherit; margin: 0; padding: 0; border: 0; background: none; }
h1, h2, ul, pre { margin: 0; padding: 0; }
svg { display: block; flex: none; fill: currentColor; }
a { color: inherit; text-decoration: none; }
select { appearance: none; outline: 0; }

.topbar { display: flex; align-items: center; flex: none; height: 71px; margin-bottom: 1px; background: #f1f2f8; border-bottom: 1px solid #dcdde0; padding: 0 27px 2px 35px; }
.logo { display: flex; align-items: center; gap: 6px; }
.word { font-family: Lato, sans-serif; font-size: 37px; line-height: 44px; padding-bottom: 4px; }
.open { color: #4a4a4a; }
.observe { color: transparent; background: linear-gradient(90deg, #efba3f, #e5823c 50%, #b5362a); background-clip: text; -webkit-background-clip: text; }
.topbar-right { display: flex; align-items: center; gap: 16px; margin-left: auto; color: #444; }
.ico { display: flex; align-items: center; justify-content: center; width: 44px; height: 44px; }
.org { display: flex; align-items: center; margin: 0 20px 0 13px; width: 102px; justify-content: space-between; }
.org select { font-size: 22px; color: #222; }
.org .caret { color: #777; margin-bottom: 8px; }

.shell { display: flex; flex: 1; min-height: 0; }
.sidebar { width: 144px; flex: none; background: #f1f2f8; border-right: 1px solid #dcdde0; padding: 9px 9px; display: flex; flex-direction: column; gap: 8px; }
.nav-item { display: flex; flex-direction: column; align-items: center; padding: 8px 0 10px; border-radius: 8px; font-size: 23px; line-height: 26px; text-align: center; color: #7d7d7d; }
.nav-item svg { color: #000; }
.nav-item.active, .nav-item.active svg { color: #fff; }
.nav-item.active { background: #5b5fae; }

.page { flex: 1; min-width: 0; display: flex; flex-direction: column; }
.page-head { display: flex; align-items: center; flex: none; height: 102px; border-bottom: 1px solid #dfdfdf; padding: 0 10px 2px 15px; }
h1 { width: 256px; font-size: 38px; font-weight: 400; padding-bottom: 3px; }
.name { width: 360px; height: 72px; background: #f1f1f1; padding: 0 22px 8px; }
.name::placeholder, .search input::placeholder { color: #6b6b6b; opacity: 1; }
.actions { display: flex; gap: 28px; margin-left: auto; }
.btn { display: flex; align-items: center; justify-content: center; height: 72px; padding: 0 14px 2px; border: 1px solid #d4d4d4; border-radius: 6px; min-width: 246px; }
.btn.info { min-width: 72px; padding: 0; }
.btn.time { background: #dddeef; width: 295px; padding: 0 19px 0 9px; justify-content: flex-start; font-size: 22px; }
.time span { margin-left: 20px; }
.time .caret { margin-left: auto; }
.btn.discard { min-width: 175px; color: #ea4c3b; font-weight: 500; }
.btn.save { min-width: 143px; font-weight: 700; }
.btn.apply { min-width: 157px; color: #fff; background: #6ca283; border-color: #6ca283; }

.work { display: flex; flex: 1; min-height: 0; }
.types { width: 182px; flex: none; border-right: 2px solid #dfdfdf; }
.type-grid { display: grid; grid-template-columns: 1fr 1fr; grid-template-rows: repeat(10, 1fr); height: 884px; }
.type { display: flex; justify-content: center; align-items: flex-start; padding-top: 15px; border: 1px solid #dfdfdf; }
.type.on { background: #ededed; border-color: #cdcdcd; }

.fields { position: relative; display: flex; flex-direction: column; width: 539px; flex: none; border-right: 2px solid #dfdfdf; }
.splitter { position: absolute; z-index: 2; top: 0; right: -14px; width: 36px; height: 36px; border-radius: 50%; background: #5b5fae; color: #fff; display: flex; align-items: center; justify-content: center; }
.fields h2 { flex: none; height: 67px; line-height: 65px; padding-left: 14px; font-size: 26px; font-weight: 700; }
.sel { position: relative; flex: none; height: 72px; margin-bottom: 7px; background: #f1f1f1; }
.sel label { position: absolute; left: 21px; top: 7px; font-size: 21px; line-height: 24px; color: #6b6b6b; pointer-events: none; }
.sel select { width: 100%; height: 72px; padding: 21px 21px 0; font-size: 23px; color: #222; }
.sel .caret { position: absolute; right: 34px; top: 32px; color: #6e6e6e; pointer-events: none; }
.search { display: flex; align-items: center; flex: none; height: 72px; background: #f1f1f1; padding-left: 21px; gap: 11px; color: #6e6e6e; }
.search input { flex: 1; color: #222; padding-bottom: 2px; }
.list-wrap { display: flex; flex: 1; min-height: 0; }
.list { flex: 1; min-width: 0; display: flex; flex-direction: column; list-style: none; overflow: hidden; padding-top: 1px; }
.list li { display: flex; align-items: center; flex: 1; min-height: 50px; padding-left: 16px; white-space: nowrap; font-size: 24px; }
.grip { color: #b5b5b5; }
.kind { color: #9c9c9c; margin: 0 13px 0 7px; }
.list li span { padding-bottom: 1px; }
.track { width: 10px; background: #c5c6e2; }
.thumb { height: 27%; background: #5b5fae; }

.main { flex: 1; min-width: 0; display: flex; flex-direction: column; }
.upper { display: flex; flex: 1; min-height: 0; }
.upper-body { flex: 1; min-width: 0; overflow: hidden; display: flex; flex-direction: column; }
.axis-row { display: flex; align-items: center; flex: none; border-bottom: 2px solid #dfdfdf; }
.axis-row.x { height: 55px; align-items: stretch; }
.axis-cell { display: flex; align-items: flex-start; width: 1069px; border-right: 1px solid #dfdfdf; }
.axis-row.y { height: 67px; border-bottom-width: 4px; }
.axis-row.f { height: 83px; }
.axis-label { display: flex; align-items: center; gap: 10px; width: 266px; height: 40px; padding-left: 29px; white-space: nowrap; }
.axis-label span { padding-bottom: 2px; }
.colon { width: 13px; line-height: 36px; padding-bottom: 2px; }
.chip { display: flex; align-items: stretch; height: 43px; border: 1px solid #cfcfcf; border-radius: 12px; overflow: hidden; }
.chip .grip { align-self: center; width: 23px; }
.chip-main { display: flex; align-items: center; gap: 22px; padding: 0 14px 1px 15px; background: #5b5fae; color: #fff; font-size: 18px; }
.chip-x { display: flex; align-items: center; justify-content: center; width: 34px; }
.chip.flt { margin-left: 15px; }
.plus { width: 43px; height: 43px; margin-left: 18px; border-radius: 50%; background: #5b5fae; display: flex; align-items: center; justify-content: center; }
.breakdown { display: flex; flex: 1; align-items: center; height: 40px; padding-left: 29px; }
.breakdown span { padding-bottom: 2px; }
.breakdown svg { margin-left: 8px; }
.bcolon { margin-left: 2px; }
.breakdown strong { flex: 1; text-align: center; font-size: 24px; font-weight: 700; padding: 9px 2px 0 0; }
.var-row { flex: none; height: 86px; padding: 25px 0 0 25px; }
.now-row { display: flex; align-items: center; justify-content: flex-end; flex: none; height: 38px; padding: 0 14px 2px 0; font-size: 27px; }
.chart { width: 100%; height: auto; overflow: hidden; font-family: "Liberation Sans", Arial, sans-serif; }
.tick { font-size: 22px; fill: #6e7079; }
.axis-title { font-size: 25px; font-weight: 700; fill: #6e7079; }
.legend { font-size: 22px; fill: #333; }
.vtrack { width: 10px; flex: none; padding-top: 11px; background: #c5c6e2; }
.vthumb { height: 100%; background: #5b5fae; }
.htrack { display: flex; flex: none; height: 10px; margin: 0 10px 2px 0; }
.hthumb { flex: 1; background: #5b5fae; }
.hrest { width: 10px; background: #c5c6e2; }

.query-bar { display: flex; align-items: center; flex: none; height: 72px; padding: 0 21px 0 30px; background: #ccc; }
.query-bar .caret { margin-top: 4px; }
.query-bar h2 { margin: 0 auto 0 23px; font-size: 26px; font-weight: 700; padding-bottom: 3px; }
.toggle { position: relative; width: 42px; height: 18px; margin-right: 22px; border-radius: 9px; background: #808080; }
.toggle input { position: absolute; opacity: 0; }
.knob { position: absolute; left: -1px; top: -4px; width: 26px; height: 26px; border-radius: 50%; background: #fff; box-shadow: 0 2px 4px #0006; font: italic 16px/23px "Liberation Serif", serif; text-align: center; color: #666; }
.seg { display: flex; height: 50px; border: 1px solid #808080; border-radius: 16px; overflow: hidden; background: #efebeb; }
.seg button { padding: 0 18px 3px; }
.seg .on { background: #5b5fae; color: #fff; font-weight: 700; }
.editor { display: flex; flex: none; height: 150px; background: #fafafa; padding-top: 6px; font-family: "DejaVu Sans Mono", monospace; font-size: 22px; line-height: 31px; }
.ln { flex: none; width: 20px; padding-left: 4px; }
.editor pre, .editor code { font: inherit; color: #383a42; }
.line { display: block; }
.kw { color: #00f; }
.fn { color: #b92bc8; }
.ty { color: #43849f; }
.id { color: #000; }
.st { color: #2854a4; }

.config { width: 88px; flex: none; display: flex; flex-direction: column; align-items: center; border-left: 2px solid #dfdfdf; padding: 24px 0 0 3px; gap: 6px; }
.config span { writing-mode: vertical-rl; font-weight: 700; }
</style>
